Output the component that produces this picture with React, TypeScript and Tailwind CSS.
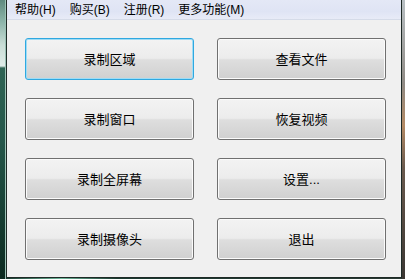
import React from 'react';

const menus = ['帮助(H)', '购买(B)', '注册(R)', '更多功能(M)'];

const buttons = [
  ['录制区域', '查看文件'],
  ['录制窗口', '恢复视频'],
  ['录制全屏幕', '设置...'],
  ['录制摄像头', '退出'],
];

function WinButton({ label, focused }: { label: string; focused?: boolean }) {
  return (
    <button
      className={`h-[42px] w-[169px] rounded-[3px] border text-[13px] text-black ${
        focused
          ? 'border-[#2fa8e0] shadow-[inset_0_0_0_1px_#9fdcf5]'
          : 'border-[#707070] shadow-[inset_0_0_0_1px_#fbfbfb]'
      } bg-[linear-gradient(to_bottom,#f3f3f3_0%,#ececec_48%,#dedede_52%,#d0d0d0_100%)]`}
    >
      <span className="relative top-[1px]">{label}</span>
    </button>
  );
}

export default function App() {
  return (
    <div
      className="flex h-[279px] w-[405px] overflow-hidden bg-[#1c3b31]"
      style={{ fontFamily: '"Liberation Sans", "Noto Sans CJK SC", sans-serif' }}
    >
      {/* left glass frame */}
      <div className="w-[6px] shrink-0 bg-[linear-gradient(to_bottom,#5f8a80_0px,#8db5aa_22px,#c9ddd6_45px,#e0ece8_66px,#2f6454_68px,#25574a_140px,#143a2e_230px,#0c2a20_279px)] shadow-[inset_-1px_0_0_#9cc2b6]" />

      <div className="flex w-[396px] shrink-0 flex-col">
        <div className="flex h-[278px] flex-col border-x border-b border-[#1e2a26] bg-[#f0f0f0]">
          {/* menu bar */}
          <div className="flex h-[20px] items-center border-b border-[#d5dbe8] bg-[linear-gradient(to_bottom,#e4e8f6,#dfe4f4_60%,#e8ebf7)] px-[1px] text-[12px] text-black">
            {menus.map((m) => (
              <span key={m} className="px-[7px] leading-[20px]">
                {m}
              </span>
            ))}
          </div>

          {/* buttons */}
          <div className="grid grid-cols-[169px_169px] gap-x-[23px] gap-y-[18px] pl-[18px] pt-[18px]">
            {buttons.map((row, r) =>
              row.map((label, c) => (
                <WinButton key={label} label={label} focused={r === 0 && c === 0} />
              ))
            )}
          </div>
        </div>
        {/* bottom glass frame */}
        <div className="h-[1px] bg-[linear-gradient(to_right,#1a3a30,#6fb89c_14%,#1a3a30_28%,#2a3a34)]" />
      </div>

      {/* right glass frame */}
      <div className="w-[3px] shrink-0 bg-[linear-gradient(to_bottom,#b9c0c4,#8f8a84_30%,#b48a64_45%,#6a5a4e_60%,#3a3632_100%)]" />
    </div>
  );
}
